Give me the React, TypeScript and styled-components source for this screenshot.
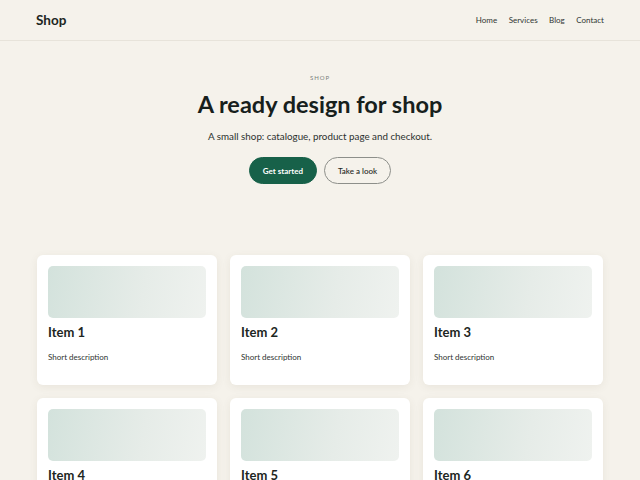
import React from 'react';
import styled, { createGlobalStyle } from 'styled-components';

const GlobalStyle = createGlobalStyle`
  html, body {
    margin: 0;
    padding: 0;
    background: #f5f2eb;
  }
  body {
    font-family: Lato, "Noto Sans", sans-serif;
    color: #1d2622;
  }
  * {
    box-sizing: border-box;
  }
`;

const items = [1, 2, 3, 4, 5, 6];

export default function App() {
  return (
    <>
      <GlobalStyle />
      <Header>
        <Logo>Shop</Logo>
        <Nav>
          <NavLink href="#">Home</NavLink>
          <NavLink href="#">Services</NavLink>
          <NavLink href="#">Blog</NavLink>
          <NavLink href="#">Contact</NavLink>
        </Nav>
      </Header>
      <Hero>
        <Eyebrow>SHOP</Eyebrow>
        <Title>A ready design for shop</Title>
        <Lead>A small shop: catalogue, product page and checkout.</Lead>
        <Actions>
          <Button $primary>Get started</Button>
          <Button>Take a look</Button>
        </Actions>
      </Hero>
      <Grid>
        {items.map((n) => (
          <Card key={n}>
            <Thumb />
            <CardTitle>Item {n}</CardTitle>
            <CardText>Short description</CardText>
          </Card>
        ))}
      </Grid>
    </>
  );
}

const Header = styled.header`
  height: 41px;
  padding: 0 36px;
  display: flex;
  align-items: center;
  justify-content: space-between;
  border-bottom: 1px solid #e7e3da;
`;

const Logo = styled.div`
  font-size: 13.5px;
  font-weight: 700;
  color: #1d2622;
`;

const Nav = styled.nav`
  display: flex;
  gap: 11.5px;
`;

const NavLink = styled.a`
  font-size: 8px;
  color: #2f3532;
  text-decoration: none;
`;

const Hero = styled.section`
  padding: 33px 36px 0;
  display: flex;
  flex-direction: column;
  align-items: center;
  text-align: center;
`;

const Eyebrow = styled.div`
  font-size: 6px;
  letter-spacing: 1px;
  color: #7a7f7c;
`;

const Title = styled.h1`
  margin: 8px 0 0;
  font-size: 23.5px;
  font-weight: 700;
  line-height: 30px;
  color: #17201c;
`;

const Lead = styled.p`
  margin: 10px 0 0;
  font-size: 9.8px;
  line-height: 14px;
  color: #2b312e;
`;

const Actions = styled.div`
  margin-top: 14px;
  display: flex;
  gap: 7px;
`;

const Button = styled.button<{ $primary?: boolean }>`
  height: 27px;
  padding: 0 13px;
  border-radius: 14px;
  font-family: inherit;
  font-size: 8px;
  font-weight: ${({ $primary }) => ($primary ? 700 : 500)};
  color: ${({ $primary }) => ($primary ? '#ffffff' : '#1d2622')};
  background: ${({ $primary }) => ($primary ? '#176149' : 'transparent')};
  border: 1px solid ${({ $primary }) => ($primary ? '#176149' : '#8d8f8a')};
`;

const Grid = styled.div`
  margin-top: 71px;
  padding: 0 37px;
  display: grid;
  grid-template-columns: repeat(3, 1fr);
  gap: 13px;
`;

const Card = styled.div`
  background: #ffffff;
  border-radius: 6px;
  padding: 11px 11px 22px;
  box-shadow: 0 2px 8px rgba(90, 80, 50, 0.08);
`;

const Thumb = styled.div`
  height: 52px;
  border-radius: 5px;
  background: linear-gradient(100deg, #d3e2dc 0%, #e6ece8 60%, #eff2ef 100%);
`;

const CardTitle = styled.h3`
  margin: 5px 0 0;
  font-size: 13px;
  font-weight: 700;
  line-height: 18px;
  color: #1d2622;
`;

const CardText = styled.p`
  margin: 10px 0 0;
  font-size: 8px;
  line-height: 12px;
  color: #2f3532;
`;
